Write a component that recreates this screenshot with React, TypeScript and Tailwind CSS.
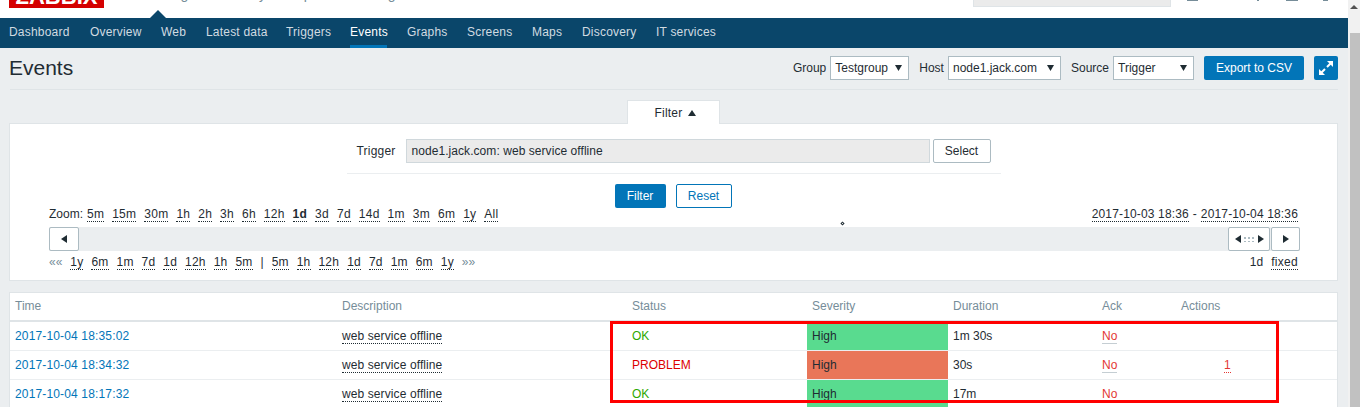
const navItems = [
  { label: 'Dashboard', width: 'w-[61px]' },
  { label: 'Overview', width: 'w-[51px]' },
  { label: 'Web', width: 'w-[25px]' },
  { label: 'Latest data', width: 'w-[60px]' },
  { label: 'Triggers', width: 'w-[44px]' },
  { label: 'Events', width: 'w-[37px]', active: true },
  { label: 'Graphs', width: 'w-[40px]' },
  { label: 'Screens', width: 'w-[45px]' },
  { label: 'Maps', width: 'w-[30px]' },
  { label: 'Discovery', width: 'w-[54px]' },
  { label: 'IT services', width: 'w-[58px]' },
];

const zoomLinks = ['5m', '15m', '30m', '1h', '2h', '3h', '6h', '12h', '1d', '3d', '7d', '14d', '1m', '3m', '6m', '1y', 'All'];
const backLinks = ['1y', '6m', '1m', '7d', '1d', '12h', '1h', '5m'];
const nextLinks = ['5m', '1h', '12h', '1d', '7d', '1m', '6m', '1y'];

const rows = [
  { time: '2017-10-04 18:35:02', status: 'OK', duration: '1m 30s', actions: '' },
  { time: '2017-10-04 18:34:32', status: 'PROBLEM', duration: '30s', actions: '1' },
  { time: '2017-10-04 18:17:32', status: 'OK', duration: '17m', actions: '' },
];

function Tri({ dir, className }: { dir: 'up' | 'down' | 'left' | 'right'; className: string }) {
  const points = {
    up: '0,8 4,0 8,8',
    down: '0,0 8,0 4,8',
    left: '8,0 8,8 0,4',
    right: '0,0 0,8 8,4',
  }[dir];
  return (
    <svg viewBox="0 0 8 8" preserveAspectRatio="none" className={className}>
      <polygon points={points} fill="currentColor" />
    </svg>
  );
}

function DotLink({ children, bold, tracking = 'tracking-[0.2px]' }: { children: string; bold?: boolean; tracking?: string }) {
  return (
    <span className={`inline-block leading-[13px] border-b border-dotted border-[#1f2c33] ${tracking} ${bold ? 'font-bold' : ''}`}>
      {children}
    </span>
  );
}

function Select({ value, width }: { value: string; width: string }) {
  return (
    <div className={`${width} h-6 bg-white border border-[#acbbc2] flex items-center justify-between pl-1 pr-[6px]`}>
      <span>{value}</span>
      <Tri dir="down" className="w-[7px] h-[6px] text-[#1f2c33]" />
    </div>
  );
}

function TopBar() {
  return (
    <div className="h-[18px] bg-white relative overflow-hidden flex">
      {/* logo, page is scrolled so only the bottom shows */}
      <div className="ml-[9px] w-[95px] h-[8px] bg-[#d40000] overflow-hidden text-center text-white font-bold text-[22px] leading-[0px]">
        <span className="relative -top-[3px]">ZABBIX</span>
      </div>
      <div className="ml-[19px] -mt-[14px] flex gap-[20px] text-[14px] leading-4 text-[#768d99] h-4">
        <span>Monitoring</span>
        <span>Inventory</span>
        <span>Reports</span>
        <span>Configuration</span>
        <span>Administration</span>
      </div>
      <svg viewBox="0 0 16 8" className="absolute left-[150px] top-[10px] w-4 h-2 text-[#0a466a]">
        <polygon points="0,8 8,0 16,8" fill="currentColor" />
      </svg>
      <div className="absolute left-[973px] top-0 w-[198px] h-[7px] bg-[#ebebeb] border border-t-0 border-[#dfe4e7]" />
      <div className="absolute left-[1187px] top-0 w-[11px] h-[1px] bg-[#768d99]" />
      <div className="absolute left-[1257px] top-0 w-[2px] h-[1px] bg-[#768d99]" />
      <div className="absolute left-[1286px] top-0 w-[12px] h-[1px] bg-[#768d99]" />
      <div className="absolute left-[1323px] top-0 w-[5px] h-[1px] bg-[#768d99]" />
    </div>
  );
}

function NavBar() {
  return (
    <div className="h-[30px] bg-[#0a466a] flex gap-[20px] pl-[9px]">
      {navItems.map(item => (
        <div
          key={item.label}
          className={`${item.width} whitespace-nowrap pt-[7px] leading-[14px] tracking-[0.2px] border-b-[3px] ${
            item.active ? 'text-white border-[#0275b8]' : 'text-[#d1dbe1] border-transparent'
          }`}
        >
          {item.label}
        </div>
      ))}
    </div>
  );
}

function Header() {
  return (
    <div className="mx-[10px] h-[42px] border-b border-[#dfe4e7] flex items-center justify-between pb-[2px]">
      <h1 className="-ml-px text-[21px] font-normal text-[#1f2c33]">Events</h1>
      <div className="flex items-center">
        <span className="mr-[4px]">Group</span>
        <Select value="Testgroup" width="w-[79px]" />
        <span className="ml-[10px] mr-[4px]">Host</span>
        <Select value="node1.jack.com" width="w-[113px]" />
        <span className="ml-[10px] mr-[4px]">Source</span>
        <Select value="Trigger" width="w-[81px]" />
        <button className="ml-[10px] w-[100px] h-6 rounded-[2px] bg-[#0275b8] text-white">Export to CSV</button>
        <button className="ml-[10px] w-6 h-6 rounded-[2px] bg-[#0275b8]">
          <svg viewBox="0 0 24 24" className="w-6 h-6 text-white">
            <polygon points="13,5 19,5 19,11" fill="currentColor" />
            <polygon points="5,19 5,13 11,19" fill="currentColor" />
            <path d="M17 7 L13 11 M7 17 L11 13" stroke="currentColor" strokeWidth="2" />
          </svg>
        </button>
      </div>
    </div>
  );
}

function FilterPanel() {
  return (
    <>
      <div className="mt-[10px] flex justify-center pr-[2px]">
        <div className="relative z-10 -mb-px w-[93px] h-[24px] pl-[5px] bg-white border border-b-0 border-[#dfe4e7] flex items-center justify-center gap-[6px] tracking-[0.2px]">
          <span>Filter</span>
          <Tri dir="up" className="w-2 h-[6px] text-[#1f2c33]" />
        </div>
      </div>
      <div className="ml-[9px] mr-[10px] h-[158px] bg-white border border-[#dfe4e7]">
        <div className="mx-auto mt-[15px] w-[654px] pb-[10px] border-b border-[#ebeef0] flex items-center">
          <label className="w-[49px] text-right tracking-[0.2px]">Trigger</label>
          <div className="ml-[10px] w-[524px] h-6 bg-[#ebebeb] border border-[#d0d8dc] flex items-center pl-[5px] tracking-[0.06px]">
            node1.jack.com: web service offline
          </div>
          <button className="ml-[3px] w-[58px] h-6 rounded-[2px] bg-white border border-[#acbbc2]">Select</button>
        </div>
        <div className="mt-[10px] flex justify-center gap-[10px] pr-[1px]">
          <button className="w-[51px] h-6 rounded-[2px] bg-[#0275b8] text-white">Filter</button>
          <button className="w-[56px] h-6 rounded-[2px] bg-white border border-[#0275b8] text-[#0275b8]">Reset</button>
        </div>
        <div className="h-[19px] ml-[39px] mr-[39px] flex items-start justify-between">
          <div className="flex gap-[8px]">
            <span className="leading-[13px] -mr-[4px]">Zoom:</span>
            {zoomLinks.map(l => (
              <DotLink key={l} bold={l === '1d'} tracking="tracking-[0.25px]">{l}</DotLink>
            ))}
          </div>
          <div className="flex gap-1 leading-[13px]">
            <DotLink tracking="tracking-[0.15px]">2017-10-03 18:36</DotLink>
            <span>-</span>
            <DotLink tracking="tracking-[0.15px]">2017-10-04 18:36</DotLink>
          </div>
        </div>
        <div className="ml-[39px] mr-[37px] h-6 bg-[#ebeef0] flex justify-between">
          <button className="w-[30px] h-6 rounded-[2px] bg-white border border-[#acbbc2] flex items-center justify-center">
            <Tri dir="left" className="w-[6px] h-2 text-[#1f2c33]" />
          </button>
          <div className="flex gap-px">
            <button className="w-[42px] h-6 rounded-[2px] bg-white border border-[#acbbc2] flex items-center justify-center gap-[3px]">
              <Tri dir="left" className="w-[6px] h-2 text-[#1f2c33]" />
              <svg viewBox="0 0 11 5" className="w-[11px] h-[5px] text-[#acbbc2]">
                <path d="M0 0h2v2H0zM4 0h2v2H4zM8 0h2v2H8zM0 4h2v2H0zM4 4h2v2H4zM8 4h2v2H8z" fill="currentColor" />
              </svg>
              <Tri dir="right" className="w-[6px] h-2 text-[#1f2c33]" />
            </button>
            <button className="w-[29px] h-6 rounded-[2px] bg-white border border-[#acbbc2] flex items-center justify-center">
              <Tri dir="right" className="w-[6px] h-2 text-[#1f2c33]" />
            </button>
          </div>
        </div>
        <div className="mt-[5px] ml-[39px] mr-[39px] flex items-start justify-between">
          <div className="flex gap-[8px]">
            <span className="leading-[13px] text-[#768d99]">««</span>
            {backLinks.map((l, i) => (
              <DotLink key={i}>{l}</DotLink>
            ))}
            <span className="leading-[13px]">|</span>
            {nextLinks.map((l, i) => (
              <DotLink key={i}>{l}</DotLink>
            ))}
            <span className="leading-[13px] text-[#768d99]">»»</span>
          </div>
          <div className="flex gap-[8px]">
            <span className="leading-[13px]">1d</span>
            <DotLink tracking="tracking-[0.3px]">fixed</DotLink>
          </div>
        </div>
      </div>
    </>
  );
}

function EventsTable() {
  return (
    <div className="mt-[11px] ml-[9px] mr-[10px] bg-white border border-b-0 border-[#dfe4e7]">
      <table className="w-full table-fixed border-separate border-spacing-0">
        <colgroup>
          <col className="w-[327px]" />
          <col className="w-[290px]" />
          <col className="w-[180px]" />
          <col className="w-[141px]" />
          <col className="w-[149px]" />
          <col className="w-[79px]" />
          <col className="w-[161px]" />
        </colgroup>
        <thead>
          <tr className="h-[29px] text-[#768d99] text-left">
            {['Time', 'Description', 'Status', 'Severity', 'Duration', 'Ack', 'Actions'].map(h => (
              <th key={h} className="font-normal pl-[5px] pb-[1px] border-b-2 border-[#dfe4e7]">
                {h}
              </th>
            ))}
          </tr>
        </thead>
        <tbody>
          {rows.map(row => (
            <tr key={row.time} className="h-[29px]">
              <td className="pl-[5px] border-b border-[#ebeef0] text-[#0275b8] tracking-[0.15px]">{row.time}</td>
              <td className="pl-[5px] border-b border-[#ebeef0]">
                <DotLink tracking="tracking-[0.1px]">web service offline</DotLink>
              </td>
              <td className={`pl-[5px] border-b border-[#ebeef0] ${row.status === 'OK' ? 'text-[#2da800]' : 'text-[#dc0000]'}`}>
                {row.status}
              </td>
              <td className={`pl-[5px] border-b border-[#ebeef0] ${row.status === 'OK' ? 'bg-[#59db8f]' : 'bg-[#e97659]'}`}>
                High
              </td>
              <td className="pl-[5px] border-b border-[#ebeef0]">{row.duration}</td>
              <td className="pl-[5px] border-b border-[#ebeef0]">
                <span className="inline-block leading-[13px] border-b border-[#c5ced3] text-[#e33734]">No</span>
              </td>
              <td className="border-b border-[#ebeef0]">
                {row.actions && (
                  <span className="ml-[48px] inline-block leading-[13px] border-b border-dotted border-[#e33734] text-[#e33734]">
                    {row.actions}
                  </span>
                )}
              </td>
            </tr>
          ))}
        </tbody>
      </table>
    </div>
  );
}

export default function App() {
  return (
    <div className="relative w-[1360px] h-[407px] overflow-hidden flex bg-[#ebeef0] text-[12px] text-[#1f2c33] font-['Liberation_Sans',Arial,sans-serif]">
      <div className="w-[1348px] shrink-0">
        <TopBar />
        <NavBar />
        <Header />
        <FilterPanel />
        <EventsTable />
      </div>

      {/* browser scrollbar */}
      <div className="w-[12px] bg-[#f1f1f1] flex flex-col">
        <div className="h-[33px] pt-[5px] pl-[2px]">
          <Tri dir="up" className="w-[8px] h-[4px] text-[#505050]" />
        </div>
        <div className="ml-[2px] flex-1 bg-[#c1c1c1]" />
      </div>

      {/* red annotation box */}
      <div className="absolute left-[610px] top-[321px] w-[669px] h-[82px] border-[3px] border-[#ff0000]" />
      {/* stray mouse cursor */}
      <div className="absolute left-[841px] top-[222px] w-[3px] h-[3px] rotate-45 border border-[#1f2c33]" />
    </div>
  );
}
